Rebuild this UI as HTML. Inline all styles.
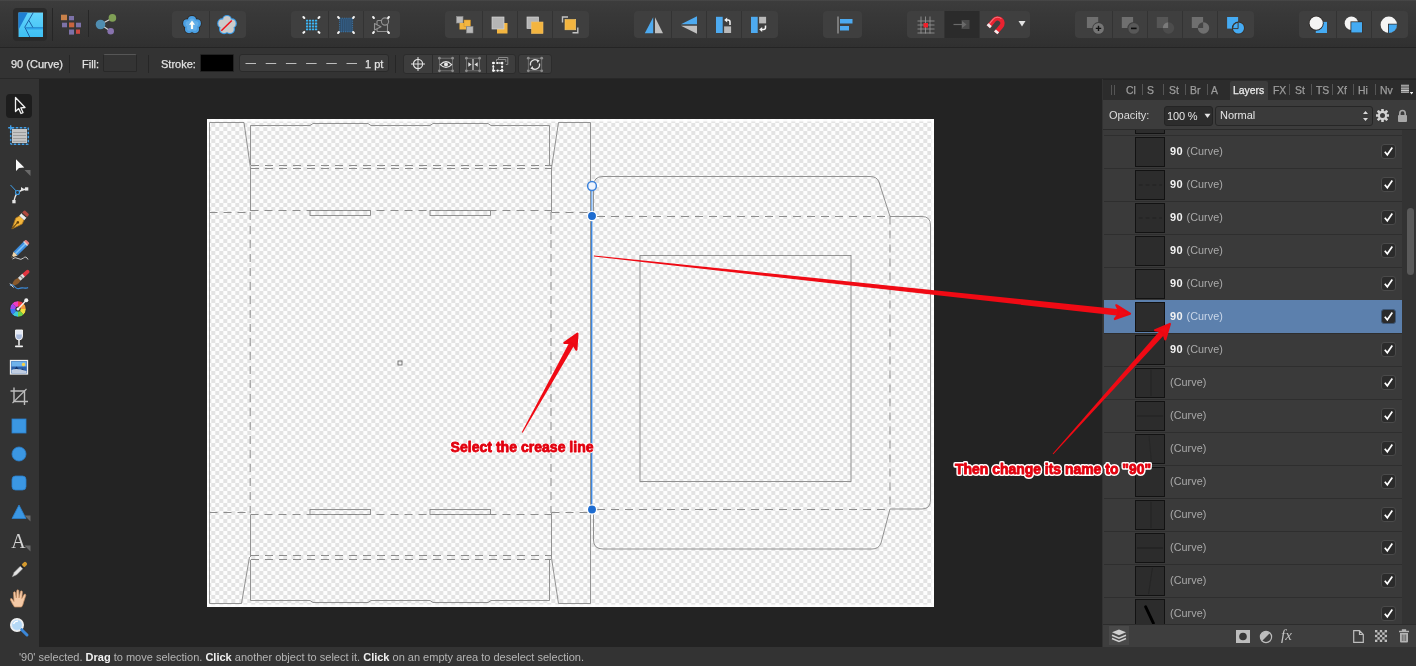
<!DOCTYPE html>
<html>
<head>
<meta charset="utf-8">
<title>Affinity Designer</title>
<style>
*{box-sizing:border-box;margin:0;padding:0}
html,body{width:1416px;height:666px;overflow:hidden;background:#232323;font-family:"Liberation Sans",sans-serif;font-size:11px;color:#d8d8d8}
.abs{position:absolute}
#top{left:0;top:0;width:1416px;height:48px;background:linear-gradient(#4a4a4a 0,#3c3c3c 1.5px,#383838 14px,#343434 32px,#303030 47px);border-bottom:1px solid #242424}
#ctx{left:0;top:48px;width:1416px;height:31px;background:#333;border-bottom:1px solid #282828}
#tools{left:0;top:79px;width:39px;height:568px;background:#333}
#work{left:39px;top:79px;width:1064px;height:568px;background:#232323}
#status{left:0;top:647px;width:1416px;height:19px;background:#333;color:#b4b4b4;font-size:11px;line-height:21px;padding-left:19px;white-space:nowrap;letter-spacing:0px}
#status b{color:#f0f0f0}
#panel{left:1103px;top:79px;width:313px;height:568px;background:#3a3a3a}
.grp{position:absolute;top:11px;height:27px;background:#3f3f3f;border-radius:4px}
.grp i{position:absolute;top:0;width:1px;height:27px;background:#333}
.cgrp{position:absolute;top:54px;height:20px;background:#3d3d3d;border-radius:3px;border:1px solid #2c2c2c}
.vsep{position:absolute;width:1px;background:#262626}
.lbl{position:absolute;top:58px;font-size:11px;line-height:13px;color:#e2e2e2;white-space:nowrap;-webkit-text-stroke:.25px #e2e2e2;letter-spacing:0}
/* layers */
.row{position:absolute;left:1px;width:298px;height:33px;background:#3a3a3a;border-top:1px solid #2e2e2e}
.row.sel{background:#5c80ad;border-top-color:#5c80ad}
.th{position:absolute;left:31px;top:1px;width:30px;height:30px;background:#2c2c2c;border:1px solid #121212}
.nm{position:absolute;left:66px;top:9px;font-size:10.8px;line-height:13px;color:#a9a9a9;white-space:nowrap;letter-spacing:0.05px}
.nm b{color:#f2f2f2;letter-spacing:.5px;font-size:11px;margin-right:.2px}
.row.sel .nm{color:#c9d6e8}
.cb{position:absolute;left:277px;top:8px;width:15px;height:15px;border-radius:3px;background:#2b2b2b;border:1px solid #4a4a4a}
.row.sel .cb{border-color:#3b5575}
.tab{position:absolute;top:5px;font-size:10.4px;line-height:13px;color:#9c9c9c;white-space:nowrap;-webkit-text-stroke:.25px currentColor}
.tsep{position:absolute;top:5px;width:1px;height:11px;background:#555}
</style>
</head>
<body>
<div id="wrap" style="position:absolute;left:0;top:0;width:1416px;height:666px;will-change:transform;overflow:hidden">
<div id="top" class="abs">
<div class="abs" style="left:13px;top:8px;width:34px;height:33px;background:#2a2a2a;border-radius:4px"></div>
<svg class="abs" style="left:17.500px;top:11.500px" width="25.500" height="25.800" viewBox="-0.5 -0.5 25.5 25.8">
<defs><linearGradient id="lg" x1="0" y1="0" x2="0" y2="1"><stop offset="0" stop-color="#64d4fc"/><stop offset="1" stop-color="#3dc0f4"/></linearGradient></defs>
<rect x="-0.500" y="-0.500" width="25.500" height="25.800" fill="#3a1d14"/>
<rect width="24.500" height="24.800" fill="url(#lg)"/>
<path d="M0,0 H9.300 L0,17.200Z" fill="#1e7fd3"/>
<path d="M7.200,15 H24.500 V17 H8.200Z" fill="#2ea4ea"/>
<path d="M14.800,0 L6.300,14.600 L11.400,24.800 M10.300,7.800 L14.400,15" stroke="#17569c" stroke-width=".9" fill="none"/>
<path d="M7,15.100 H24.500" stroke="#1f74bd" stroke-width=".6"/>
</svg>
<div class="vsep" style="left:52px;top:8px;height:33px;background:#262626"></div>
<svg class="abs" style="left:60px;top:13px" width="22" height="23" viewBox="0 0 22 23">
<rect x="1" y="1.700" width="6" height="5.500" fill="#c9814a"/><rect x="9" y="3" width="5" height="4.300" fill="#7d72a8"/>
<rect x="2" y="9.700" width="5" height="4.600" fill="#7d72a8"/><rect x="9" y="9.500" width="5.200" height="4.800" fill="#c8643f"/><rect x="16" y="9.700" width="5" height="4.600" fill="#7d72a8"/>
<rect x="9" y="16.500" width="5" height="5.100" fill="#7d72a8"/><rect x="16" y="16.500" width="4" height="4.300" fill="#cc4a42"/>
</svg>
<div class="vsep" style="left:88px;top:10px;height:27px;background:#262626"></div>
<svg class="abs" style="left:95px;top:13px" width="23" height="23" viewBox="0 0 23 23">
<path d="M5.500,11.500 L17.400,4.900 M5.500,11.500 L15.700,18.200" stroke="#d6d6d6" stroke-width="1.100"/>
<circle cx="5.500" cy="11.500" r="4.800" fill="#4f8db0"/><circle cx="17.400" cy="4.900" r="3.800" fill="#7f9f55"/><circle cx="15.700" cy="18.200" r="3.300" fill="#8873ae"/>
</svg>

<div class="grp" style="left:172px;width:74px"><i style="left:37px"></i></div>
<svg class="abs" style="left:181px;top:13px" width="22" height="23" viewBox="0 0 22 23"><circle cx="11.00" cy="7.00" r="5.00" fill="#2e2a28"/><circle cx="15.76" cy="10.45" r="5.00" fill="#2e2a28"/><circle cx="13.94" cy="16.05" r="5.00" fill="#2e2a28"/><circle cx="8.06" cy="16.05" r="5.00" fill="#2e2a28"/><circle cx="6.24" cy="10.45" r="5.00" fill="#2e2a28"/><circle cx="11.00" cy="7.00" r="4.10" fill="#4a9fe2"/><circle cx="15.76" cy="10.45" r="4.10" fill="#4a9fe2"/><circle cx="13.94" cy="16.05" r="4.10" fill="#4a9fe2"/><circle cx="8.06" cy="16.05" r="4.10" fill="#4a9fe2"/><circle cx="6.24" cy="10.45" r="4.10" fill="#4a9fe2"/><circle cx="11" cy="12" r="5.00" fill="#4a9fe2"/><circle cx="11.00" cy="8.20" r="2.80" fill="#62aee8"/><circle cx="14.61" cy="10.83" r="2.80" fill="#62aee8"/><circle cx="13.23" cy="15.07" r="2.80" fill="#62aee8"/><circle cx="8.77" cy="15.07" r="2.80" fill="#62aee8"/><circle cx="7.39" cy="10.83" r="2.80" fill="#62aee8"/><circle cx="11" cy="12" r="4.00" fill="#62aee8"/><path d="M11,7.600 L14,11.800 H12.100 V16 H9.900 V11.800 H8Z" fill="#fdfdf6"/></svg>
<svg class="abs" style="left:216px;top:13px" width="22" height="23" viewBox="0 0 22 23"><circle cx="11.00" cy="7.00" r="5.10" fill="#3a9be6"/><circle cx="15.76" cy="10.45" r="5.10" fill="#3a9be6"/><circle cx="13.94" cy="16.05" r="5.10" fill="#3a9be6"/><circle cx="8.06" cy="16.05" r="5.10" fill="#3a9be6"/><circle cx="6.24" cy="10.45" r="5.10" fill="#3a9be6"/><circle cx="11.00" cy="7.00" r="3.90" fill="#cbcbcb"/><circle cx="15.76" cy="10.45" r="3.90" fill="#cbcbcb"/><circle cx="13.94" cy="16.05" r="3.90" fill="#cbcbcb"/><circle cx="8.06" cy="16.05" r="3.90" fill="#cbcbcb"/><circle cx="6.24" cy="10.45" r="3.90" fill="#cbcbcb"/><circle cx="11" cy="12" r="5.00" fill="#cbcbcb"/><path d="M5.300,17.700 L15.800,7.500" stroke="#f0101a" stroke-width="1.500"/></svg>

<div class="grp" style="left:291px;width:109px"><i style="left:37px"></i><i style="left:72px"></i></div>
<svg class="abs" style="left:300px;top:14px" width="22" height="22" viewBox="0 0 22 22"><g fill="#3cb6f6"><rect x="6" y="5.7" width="2.200" height="1.900" rx=".3"/><rect x="9" y="5.7" width="2.200" height="1.900" rx=".3"/><rect x="12" y="5.7" width="2.200" height="1.900" rx=".3"/><rect x="15" y="5.7" width="2.200" height="1.900" rx=".3"/><rect x="6" y="8.6" width="2.200" height="1.900" rx=".3"/><rect x="9" y="8.6" width="2.200" height="1.900" rx=".3"/><rect x="12" y="8.6" width="2.200" height="1.900" rx=".3"/><rect x="15" y="8.6" width="2.200" height="1.900" rx=".3"/><rect x="6" y="11.5" width="2.200" height="1.900" rx=".3"/><rect x="9" y="11.5" width="2.200" height="1.900" rx=".3"/><rect x="12" y="11.5" width="2.200" height="1.900" rx=".3"/><rect x="15" y="11.5" width="2.200" height="1.900" rx=".3"/><rect x="6" y="14.4" width="2.200" height="1.900" rx=".3"/><rect x="9" y="14.4" width="2.200" height="1.900" rx=".3"/><rect x="12" y="14.4" width="2.200" height="1.900" rx=".3"/><rect x="15" y="14.4" width="2.200" height="1.900" rx=".3"/></g><path d="M3.400,3.100 L4.300,4 M19.400,3.100 L18.500,4 M3.400,18.800 L4.300,17.900 M19.400,18.800 L18.500,17.900" stroke="#f4f4f4" stroke-width="2.100" stroke-linecap="round"/></svg>
<svg class="abs" style="left:335.400px;top:13.900px" width="22" height="22" viewBox="0 0 22 22"><rect x="4.600" y="4.200" width="13" height="13.600" fill="#2f4b67"/><path d="M5.60,4.600 V18M7.50,4.600 V18M9.40,4.600 V18M11.30,4.600 V18M13.20,4.600 V18M15.10,4.600 V18" stroke="#3f86c4" stroke-width=".6" stroke-opacity=".6" transform="translate(.8 0)"/><rect x="4.600" y="4.200" width="13" height="13.600" fill="none" stroke="#3f86c4" stroke-width=".7" stroke-dasharray="1.200 1"/><path d="M3.100,3.100 L3.900,3.900 M18.900,3.100 L18.100,3.900 M3.100,18.900 L3.900,18.100 M18.900,18.900 L18.100,18.100" stroke="#f4f4f4" stroke-width="2.100" stroke-linecap="round"/></svg>
<svg class="abs" style="left:370.300px;top:13.900px" width="22" height="22" viewBox="0 0 22 22"><rect x="7" y="6.500" width="10.500" height="11" rx="1" fill="none" stroke="#929292" stroke-width="1.100"/><circle cx="15" cy="7.500" r="3.600" fill="#454545" stroke="#929292" stroke-width="1.100"/><path d="M4.500,9.500 L11,12.700 L4.500,16Z" fill="#454545" stroke="#929292" stroke-width="1.100" stroke-linejoin="round"/><path d="M3.100,3.100 L3.900,3.900 M18.900,3.100 L18.100,3.900 M3.100,18.900 L3.900,18.100 M18.900,18.900 L18.100,18.100" stroke="#f4f4f4" stroke-width="2.100" stroke-linecap="round"/></svg>

<div class="grp" style="left:445px;width:144px"><i style="left:37px"></i><i style="left:72px"></i><i style="left:107px"></i></div>
<svg class="abs" style="left:453px;top:13.500px" width="22" height="22" viewBox="0 0 22 22">
<rect x="3.5" y="2.5" width="6.5" height="6.5" fill="#b9b9b9" stroke="#8d8d8d" stroke-width=".6"/>
<rect x="6.5" y="9" width="6.5" height="6.5" fill="#f3b540"/><rect x="11" y="6" width="6.5" height="6.5" fill="#f3b540" stroke="#c98a20" stroke-width=".5"/>
<rect x="13.5" y="12.5" width="6.5" height="6.5" fill="#b9b9b9" stroke="#8d8d8d" stroke-width=".6"/>
</svg>
<svg class="abs" style="left:488px;top:13.500px" width="22" height="22" viewBox="0 0 22 22">
<rect x="9" y="9" width="10.5" height="10.5" fill="#f3b540"/>
<rect x="4" y="3" width="12" height="12" fill="#b5b5b5" stroke="#d5d5d5" stroke-width=".7"/>
</svg>
<svg class="abs" style="left:523px;top:13.500px" width="22" height="22" viewBox="0 0 22 22">
<rect x="4" y="3" width="11.5" height="11.5" fill="#b5b5b5" stroke="#d5d5d5" stroke-width=".7"/>
<rect x="8.5" y="8" width="11.5" height="11.5" fill="#f3b540" stroke="#f3bf62" stroke-width=".6"/>
</svg>
<svg class="abs" style="left:558px;top:13.500px" width="22" height="22" viewBox="0 0 22 22">
<path d="M4.500,8.500 V3 H10" fill="none" stroke="#c4c4c4" stroke-width="1.400"/>
<path d="M19.800,13.500 V18.800 H14.500" fill="none" stroke="#c4c4c4" stroke-width="1.400"/>
<rect x="7" y="5.500" width="10.700" height="10.300" fill="#f3b540" stroke="#f7c968" stroke-width=".6"/>
</svg>

<div class="grp" style="left:634px;width:144px"><i style="left:37px"></i><i style="left:72px"></i><i style="left:107px"></i></div>
<svg class="abs" style="left:642px;top:13.500px" width="22" height="22" viewBox="0 0 22 22">
<path d="M11.200,3.300 V19.300 H2.800Z" fill="#4daaf0"/><path d="M13,3.300 V19.300 H21Z" fill="#c0c0c0"/>
</svg>
<svg class="abs" style="left:677px;top:13.500px" width="22" height="22" viewBox="0 0 22 22">
<path d="M20,2.200 V10.200 H4Z" fill="#4daaf0"/><path d="M20,19.800 V11.800 H4Z" fill="#c0c0c0"/>
</svg>
<svg class="abs" style="left:712px;top:13.500px" width="22" height="22" viewBox="0 0 22 22">
<rect x="4" y="2.800" width="6.700" height="16.200" fill="#4daaf0"/><rect x="12.100" y="12.400" width="7" height="6.600" fill="#b9b9b9"/>
<path d="M18,11 V8 Q18,6 16,6 H14.500" fill="none" stroke="#f4f4f4" stroke-width="1.500"/><path d="M15.200,3.400 V8.600 L12.200,6Z" fill="#f4f4f4"/>
</svg>
<svg class="abs" style="left:747px;top:13.500px" width="22" height="22" viewBox="0 0 22 22">
<rect x="4" y="2.800" width="6.700" height="16.200" fill="#4daaf0"/><rect x="12.100" y="2.800" width="7" height="6.600" fill="#b9b9b9"/>
<path d="M18.500,11.500 V13.500 Q18.500,15.500 16.500,15.500 H14.500" fill="none" stroke="#f4f4f4" stroke-width="1.500"/><path d="M15.200,12.900 V18.100 L12.200,15.500Z" fill="#f4f4f4"/>
</svg>

<div class="grp" style="left:823px;width:39px"></div>
<svg class="abs" style="left:833.300px;top:13.500px" width="22" height="22" viewBox="0 0 22 22">
<path d="M5,2.500 V19.500" stroke="#c4c4c4" stroke-width=".9"/><rect x="7" y="5" width="12.500" height="4.500" fill="#4daaf0"/><rect x="7" y="12" width="9" height="4.500" fill="#4daaf0"/>
</svg>

<div class="grp" style="left:907px;width:123px;background:#3f3f3f"><i style="left:37px"></i><i style="left:72px"></i></div>
<div class="abs" style="left:945px;top:11px;width:34px;height:27px;background:#2b2b2b"></div>
<svg class="abs" style="left:915px;top:14px" width="22" height="22" viewBox="0 0 22 22">
<path d="M2.5,7 H19.5 M2.5,11 H19.5 M2.5,15 H19.5 M2.5,19 H19.5 M6,2.5 V19.5 M10.5,2.5 V19.5 M15,2.5 V19.5" stroke="#9a9a9a" stroke-width=".8"/>
<rect x="8.5" y="9" width="4.5" height="4.5" fill="#f2202a"/>
</svg>
<svg class="abs" style="left:951px;top:14px" width="22" height="22" viewBox="0 0 22 22">
<rect x="10.5" y="6" width="8" height="9" fill="#4a4a4a"/><path d="M2.5,10.5 H12" stroke="#6a6a6a" stroke-width="1.2"/><path d="M11,7 L15.5,10.5 L11,14Z" fill="#6a6a6a"/>
</svg>
<svg class="abs" style="left:985.900px;top:14.400px" width="21" height="21" viewBox="0 0 24 24">
<g transform="rotate(40 12 12)">
<path d="M4,20 V10 A8,8 0 0 1 20,10 V20 H15 V10 A3,3 0 0 0 9,10 V20Z" fill="#ea2230"/>
<path d="M5.200,19 V10 A6.800,6.800 0 0 1 12,3.300" fill="none" stroke="#f4737c" stroke-width="1.200"/>
<rect x="4" y="16.800" width="5" height="3.200" fill="#ededed"/><rect x="15" y="16.800" width="5" height="3.200" fill="#ededed"/>
</g>
</svg>
<svg class="abs" style="left:1018.400px;top:20.400px" width="8" height="8" viewBox="0 0 8 8"><path d="M0.5,1 H7.5 L4,6.5Z" fill="#e2e2e2"/></svg>

<div class="grp" style="left:1075px;width:179px"><i style="left:37px"></i><i style="left:72px"></i><i style="left:107px"></i><i style="left:142px"></i></div>
<svg class="abs" style="left:1083px;top:13.600px" width="22" height="22" viewBox="0 0 22 22">
<rect x="3.900" y="3" width="11.300" height="11" fill="#6f6f6f"/><circle cx="15.500" cy="14.400" r="6.300" fill="#3f3f3f"/><circle cx="15.500" cy="14.400" r="5.400" fill="#757575"/><path d="M12.800,14.400 H18.200 M15.500,11.700 V17.100" stroke="#111" stroke-width="1.400"/>
</svg>
<svg class="abs" style="left:1118px;top:13.600px" width="22" height="22" viewBox="0 0 22 22">
<rect x="3.800" y="3" width="11.300" height="11" fill="#6f6f6f"/><circle cx="15.800" cy="14.400" r="6.500" fill="#3f3f3f"/><circle cx="15.800" cy="14.400" r="5.400" fill="#585858"/><path d="M13,14.400 H18.600" stroke="#0c0c0c" stroke-width="1.600"/>
</svg>
<svg class="abs" style="left:1153px;top:13.600px" width="22" height="22" viewBox="0 0 22 22">
<rect x="3.800" y="3" width="11.300" height="11" fill="#565656"/><circle cx="15.500" cy="14" r="5.700" fill="#4c4c4c"/><path d="M9.800,14 A5.700,5.700 0 0 1 15.100,8.320 V14Z" fill="#7a7a7a"/>
</svg>
<svg class="abs" style="left:1188px;top:13.600px" width="22" height="22" viewBox="0 0 22 22">
<rect x="3.800" y="3" width="11.300" height="11" fill="#6f6f6f"/><circle cx="15.500" cy="14" r="5.700" fill="#6f6f6f"/><path d="M9.800,14 A5.700,5.700 0 0 1 15.100,8.320 V14Z" fill="#454545"/>
</svg>
<svg class="abs" style="left:1223px;top:13.600px" width="22" height="22" viewBox="0 0 22 22">
<rect x="4.100" y="3" width="11" height="11.600" fill="#45abf3"/><circle cx="15.400" cy="14" r="6.500" fill="#3a3028"/><circle cx="15.400" cy="14" r="5.600" fill="#45abf3"/><path d="M9.800,14.600 H15.100 V8.400" fill="none" stroke="#3a3028" stroke-width=".9"/><path d="M9.800,14 A5.600,5.600 0 0 1 15.100,8.400" fill="none" stroke="#3a3028" stroke-width=".9"/>
</svg>

<div class="grp" style="left:1299px;width:109px"><i style="left:37px"></i><i style="left:72px"></i></div>
<svg class="abs" style="left:1307px;top:13.600px" width="22" height="22" viewBox="0 0 22 22">
<rect x="8.800" y="7.900" width="11.200" height="11.100" fill="#45abf3"/><circle cx="9.200" cy="9.200" r="7.500" fill="#2e2a28"/><circle cx="9.200" cy="9.200" r="6.600" fill="#f4f4f4"/>
</svg>
<svg class="abs" style="left:1342px;top:13.600px" width="22" height="22" viewBox="0 0 22 22">
<circle cx="9.400" cy="9.200" r="6.700" fill="#f4f4f4"/><rect x="8.500" y="7.400" width="12" height="11.600" fill="#2e2a28"/><rect x="9.300" y="8.200" width="10.700" height="10.300" fill="#45abf3"/>
</svg>
<svg class="abs" style="left:1377px;top:13.600px" width="22" height="22" viewBox="0 0 22 22">
<circle cx="11.800" cy="10.800" r="8.200" fill="#f4f4f4"/><path d="M11,9.800 H19.950 A8.200,8.200 0 0 1 11,18.950Z" fill="#2e2a28"/><path d="M11.800,10.600 H20 A8.200,8.200 0 0 1 11.800,19Z" fill="#45abf3"/>
</svg>
<!--TOP2-->
</div>
<div id="ctx" class="abs"></div>
<div class="lbl" style="left:11px">90 (Curve)</div>
<div class="vsep" style="left:69px;top:55px;height:18px"></div>
<div class="lbl" style="left:82px">Fill:</div>
<div class="abs" style="left:103px;top:54px;width:34px;height:18px;background:#343434;border:1px solid #282828;border-radius:2px;border-top-color:#565656"></div>
<div class="vsep" style="left:148px;top:55px;height:18px"></div>
<div class="lbl" style="left:161px">Stroke:</div>
<div class="abs" style="left:200px;top:54px;width:34px;height:18px;background:#000;border:1px solid #222;border-radius:1px"></div>
<div class="abs" style="left:239px;top:54px;width:150px;height:18px;background:#3c3c3c;border:1px solid #2a2a2a;border-radius:3px"></div>
<svg class="abs" style="left:239px;top:54px" width="150" height="18" viewBox="0 0 150 18"><path d="M6.5,9.5 H120" stroke="#bdbdbd" stroke-width="1.2" stroke-dasharray="10.5 9.7"/></svg>
<div class="lbl" style="left:365px">1 pt</div>
<div class="vsep" style="left:395px;top:55px;height:18px"></div>
<div class="cgrp" style="left:403px;width:113px"></div>
<div class="vsep" style="left:432px;top:55px;height:18px;background:#2c2c2c"></div><div class="vsep" style="left:459px;top:55px;height:18px;background:#2c2c2c"></div><div class="vsep" style="left:486px;top:55px;height:18px;background:#2c2c2c"></div>
<div class="cgrp" style="left:518px;width:34px"></div>
<svg class="abs" style="left:410px;top:56px" width="16" height="16" viewBox="0 0 16 16"><circle cx="8" cy="8" r="4.6" fill="none" stroke="#e0e0e0" stroke-width="1.2"/><path d="M8,1 V15 M1,8 H15" stroke="#e0e0e0" stroke-width="1"/></svg>
<svg class="abs" style="left:437px;top:56px" width="18" height="17" viewBox="0 0 18 17"><rect x="2.4" y="2.2" width="13.2" height="12.600000000000001" fill="none" stroke="#787878" stroke-width=".8"/><circle cx="2.4" cy="2.2" r="1.400" fill="#8c8c8c"/><circle cx="15.6" cy="2.2" r="1.400" fill="#8c8c8c"/><circle cx="2.4" cy="14.8" r="1.400" fill="#8c8c8c"/><circle cx="15.6" cy="14.8" r="1.400" fill="#8c8c8c"/><path d="M3.300,8.600 Q9,2.600 14.700,8.600 Q9,14.400 3.300,8.600Z" fill="#3b3b3b" stroke="#e2e2e2" stroke-width="1.100"/><circle cx="9" cy="8.600" r="2" fill="#e8e8e8"/></svg>
<svg class="abs" style="left:464px;top:56px" width="18" height="17" viewBox="0 0 18 17"><rect x="2.4" y="2.2" width="13.2" height="12.600000000000001" fill="none" stroke="#787878" stroke-width=".8"/><circle cx="2.4" cy="2.2" r="1.400" fill="#8c8c8c"/><circle cx="15.6" cy="2.2" r="1.400" fill="#8c8c8c"/><circle cx="2.4" cy="14.8" r="1.400" fill="#8c8c8c"/><circle cx="15.6" cy="14.8" r="1.400" fill="#8c8c8c"/><path d="M9,3 V14" stroke="#e0e0e0" stroke-width="1.100"/><path d="M4.300,6.300 L7.600,8.500 L4.300,10.700Z M13.700,6.300 L10.400,8.500 L13.700,10.700Z" fill="#e0e0e0"/></svg>
<svg class="abs" style="left:490px;top:55px" width="20" height="18" viewBox="0 0 20 18">
<path d="M8.500,4.500 V2.500 H17.800 V9.500 H15.800 M6.500,6.500 V4.500 H15.800 V7" fill="none" stroke="#8a8a8a" stroke-width="1"/>
<rect x="3.300" y="8" width="8.800" height="7.600" fill="none" stroke="#f4f4f4" stroke-width="1.300" stroke-dasharray="1.600 1.300"/>
<g fill="#f6f6f6"><circle cx="3.300" cy="8" r="1.300"/><circle cx="12.100" cy="8" r="1.300"/><circle cx="3.300" cy="15.600" r="1.300"/><circle cx="12.100" cy="15.600" r="1.300"/><circle cx="7.700" cy="8" r="1.100"/><circle cx="7.700" cy="15.600" r="1.100"/><circle cx="3.300" cy="11.800" r="1.100"/><circle cx="12.100" cy="11.800" r="1.100"/></g>
</svg>
<svg class="abs" style="left:526px;top:56px" width="18" height="17" viewBox="0 0 18 17"><rect x="2.3" y="2.2" width="13.399999999999999" height="12.600000000000001" fill="none" stroke="#787878" stroke-width=".8"/><circle cx="2.3" cy="2.2" r="1.400" fill="#8c8c8c"/><circle cx="15.7" cy="2.2" r="1.400" fill="#8c8c8c"/><circle cx="2.3" cy="14.8" r="1.400" fill="#8c8c8c"/><circle cx="15.7" cy="14.8" r="1.400" fill="#8c8c8c"/><path d="M4.600,9.500 A4.500,4.500 0 0 1 12,5 M13.400,7.500 A4.500,4.500 0 0 1 6,12" fill="none" stroke="#e0e0e0" stroke-width="1.300"/><path d="M10.600,3.200 L13.600,4.600 L11.400,7Z M7.400,13.800 L4.400,12.400 L6.600,10Z" fill="#e0e0e0"/></svg>

<div id="tools" class="abs"></div>
<div class="abs" style="left:6px;top:94px;width:26px;height:24px;background:#1d1d1d;border-radius:4px"></div>
<svg class="abs" style="left:7px;top:93px" width="24" height="24" viewBox="0 0 24 24"><path d="M8.500,4.500 L8.500,18.500 L11.700,15.600 L14,20.500 L16,19.600 L13.800,14.800 L18,14.500Z" fill="#1d1d1d" stroke="#f2f2f2" stroke-width="1.300" stroke-linejoin="round"/></svg>
<svg class="abs" style="left:7px;top:123px" width="24" height="24" viewBox="0 0 24 24"><rect x="5" y="6" width="15" height="14" fill="#c4c4c4"/><path d="M6,9.500 H19 M6,12.500 H19 M6,15.500 H19 M6,18.300 H19" stroke="#9d9d9d" stroke-width="1"/><rect x="3.700" y="4.700" width="17.600" height="16.600" rx="1" fill="none" stroke="#3f9ee8" stroke-width="1.500" stroke-dasharray="2.600 1.400"/><path d="M1.200,4.700 H6.200 M3.700,2.200 V7.200" stroke="#3f9ee8" stroke-width="1.400"/></svg>
<svg class="abs" style="left:7px;top:153px" width="24" height="24" viewBox="0 0 24 24"><path d="M9,6.300 L9,18 L12,15 L17.300,14.600Z" fill="#fafafa"/><path d="M23.5,23 v-6 h-6Z" fill="#6a6a6a"/></svg>
<svg class="abs" style="left:7px;top:181px" width="24" height="24" viewBox="0 0 24 24"><path d="M7,21 Q8,9 20,8" fill="none" stroke="#e6e6e6" stroke-width="1.300"/><path d="M3.500,4 L11,12" stroke="#3f9ee8" stroke-width="1"/><circle cx="10.500" cy="11.500" r="2" fill="#333" stroke="#3f9ee8" stroke-width="1.100"/><rect x="18" y="6.300" width="3.300" height="3.300" fill="#e6e6e6"/><rect x="5.300" y="19" width="3.300" height="3.300" fill="#e6e6e6"/><path d="M17,8 L14,6 V10Z" fill="#e6e6e6"/></svg>
<svg class="abs" style="left:7px;top:209px" width="24" height="24" viewBox="0 0 24 24"><g transform="translate(12 12) rotate(42) scale(1.180) translate(-12 -12.500)"><path d="M12,21.500 L8.300,12.500 L9.500,9 H14.500 L15.700,12.500Z" fill="#f2b53c" stroke="#a8731a" stroke-width=".6"/><path d="M12,21 V14.500" stroke="#5e3e0c" stroke-width=".9"/><circle cx="12" cy="14" r="1.100" fill="#5e3e0c"/><rect x="9.200" y="6" width="5.600" height="3" fill="#ececec"/><rect x="9.200" y="2.500" width="5.600" height="3.500" rx="1" fill="#b04a3f"/><rect x="9.200" y="5.300" width="5.600" height="1.100" fill="#3a3a3a"/></g></svg>
<svg class="abs" style="left:7px;top:239px" width="24" height="24" viewBox="0 0 24 24"><g transform="translate(12.500 10.500) rotate(45) scale(1.150) translate(-12 -11)"><rect x="9.700" y="3.500" width="4.800" height="12.500" fill="#3c8ee0"/><rect x="11.400" y="3.500" width="1.400" height="12.500" fill="#7cc0f5"/><rect x="9.700" y="1" width="4.800" height="2.500" rx="1" fill="#e87f7f"/><rect x="9.700" y="3" width="4.800" height="1.200" fill="#d9d9d9"/><path d="M9.700,16 L12.100,21 L14.500,16Z" fill="#f0d5a8"/><path d="M11.300,19.300 L12.100,21 L12.900,19.300Z" fill="#333"/></g><path d="M5.500,20 Q8,17.500 11,19.500 T16.500,19 T21,20.500" fill="none" stroke="#c9c9c9" stroke-width="1"/></svg>
<svg class="abs" style="left:7px;top:268px" width="24" height="24" viewBox="0 0 24 24"><g transform="translate(13 10.500) rotate(48) scale(1.200) translate(-12.200 -10.500)"><rect x="10.600" y="0.500" width="3.200" height="7" rx="1.400" fill="#e2343f"/><rect x="10.600" y="6.500" width="3.200" height="5" fill="#dcdcdc"/><rect x="10.600" y="8.300" width="3.200" height="1" fill="#888"/><path d="M10.600,11.500 H13.800 Q15.500,15.500 12.200,19.500 Q9,15.500 10.600,11.500Z" fill="#8a5a2c"/></g><path d="M3,17.500 Q5,15.500 7.500,18.500 T12,20.500 T17,20 T21,19.500" fill="none" stroke="#3c8ee0" stroke-width="1.100"/><path d="M3,15.500 L6.500,19.500" stroke="#e6e6e6" stroke-width="1"/></svg>
<svg class="abs" style="left:7px;top:296px" width="24" height="24" viewBox="0 0 24 24"><path d="M11,13 L11.00,5.00 A8,8 0 0 1 16.76,7.44 Z" fill="#f03c3c"/><path d="M11,13 L16.66,7.34 A8,8 0 0 1 19.00,13.14 Z" fill="#f09a3c"/><path d="M11,13 L19.00,13.00 A8,8 0 0 1 16.56,18.76 Z" fill="#f0e03c"/><path d="M11,13 L16.66,18.66 A8,8 0 0 1 10.86,21.00 Z" fill="#6cd04a"/><path d="M11,13 L11.00,21.00 A8,8 0 0 1 5.24,18.56 Z" fill="#3cc8d8"/><path d="M11,13 L5.34,18.66 A8,8 0 0 1 3.00,12.86 Z" fill="#3c78f0"/><path d="M11,13 L3.00,13.00 A8,8 0 0 1 5.44,7.24 Z" fill="#9a4af0"/><path d="M11,13 L5.34,7.34 A8,8 0 0 1 11.14,5.00 Z" fill="#f03cc0"/><circle cx="11" cy="13" r="2.600" fill="#2c2c2c"/><circle cx="11" cy="13" r="8.300" fill="none" stroke="#2c2c2c" stroke-width=".8"/><path d="M11,13 L19,4.500" stroke="#f2f2f2" stroke-width="1.400"/><circle cx="19.300" cy="4.300" r="2" fill="#f2f2f2"/><circle cx="11" cy="13" r="1.500" fill="#f2f2f2"/></svg>
<svg class="abs" style="left:7px;top:325px" width="24" height="24" viewBox="0 0 24 24"><path d="M8.500,5 H15.500 V11 Q15.500,15 12,15 Q8.500,15 8.500,11Z" fill="#e4e9f4" stroke="#f8f8f8" stroke-width=".9"/><path d="M9.200,9.500 H14.800 V11 Q14.800,14.300 12,14.300 Q9.200,14.300 9.200,11Z" fill="#a9bbdc"/><path d="M12,15 V20.500" stroke="#f2f2f2" stroke-width="1.500"/><path d="M8.800,21.300 H15.200" stroke="#f2f2f2" stroke-width="1.700" stroke-linecap="round"/></svg>
<svg class="abs" style="left:7px;top:355px" width="24" height="24" viewBox="0 0 24 24"><rect x="3.500" y="5.500" width="17" height="13.500" fill="#2c5fa8" stroke="#f0f0f0" stroke-width="1.300"/><rect x="4.500" y="6.500" width="15" height="5" fill="#6fb2ec"/><circle cx="16.500" cy="9.500" r="1.700" fill="#f5d04a"/><path d="M4.500,18 L9.500,11.500 L13,15.500 L15.500,13.500 L19.500,18Z" fill="#17396e"/><path d="M4.500,15 Q9,12.500 19.500,16 V18 H4.500Z" fill="#dfe8f4" opacity=".85"/></svg>
<svg class="abs" style="left:7px;top:384px" width="24" height="24" viewBox="0 0 24 24"><path d="M7,3.500 V17.500 H21 M3.500,7 H17.500 V21" fill="none" stroke="#bdbdbd" stroke-width="1.400"/><path d="M5.500,19 L19.500,5" stroke="#bdbdbd" stroke-width="1.100"/></svg>
<svg class="abs" style="left:7px;top:414px" width="24" height="24" viewBox="0 0 24 24"><rect x="5" y="5" width="14" height="14" fill="#3b97e3" stroke="#2a7fcc" stroke-width=".8"/></svg>
<svg class="abs" style="left:7px;top:442px" width="24" height="24" viewBox="0 0 24 24"><circle cx="12" cy="12" r="7" fill="#3b97e3" stroke="#2a7fcc" stroke-width=".8"/></svg>
<svg class="abs" style="left:7px;top:471px" width="24" height="24" viewBox="0 0 24 24"><rect x="5" y="5" width="14" height="14" rx="3.500" fill="#3b97e3" stroke="#2a7fcc" stroke-width=".8"/></svg>
<svg class="abs" style="left:7px;top:500px" width="24" height="24" viewBox="0 0 24 24"><path d="M12,5 L19,18.500 H5Z" fill="#3b97e3" stroke="#2a7fcc" stroke-width=".8" stroke-linejoin="round"/><path d="M23.5,21.5 v-6 h-6Z" fill="#6a6a6a"/></svg>
<svg class="abs" style="left:7px;top:530px" width="24" height="24" viewBox="0 0 24 24"><text x="11.500" y="18" text-anchor="middle" font-family="Liberation Serif, serif" font-size="20" fill="#d2d2d2">A</text><path d="M23.5,21.5 v-6 h-6Z" fill="#6a6a6a"/></svg>
<svg class="abs" style="left:7px;top:558px" width="24" height="24" viewBox="0 0 24 24"><g transform="rotate(45 12 12)"><rect x="10" y="1.500" width="4" height="5.500" rx="1.800" fill="#d49a2e"/><rect x="8.800" y="6.500" width="6.400" height="2" fill="#2a2a2a"/><path d="M10.300,8.500 H13.700 V17 L12,21.500 L10.300,17Z" fill="#e4e4e4" stroke="#9a9a9a" stroke-width=".5"/></g></svg>
<svg class="abs" style="left:7px;top:586px" width="24" height="24" viewBox="0 0 24 24"><path d="M7.500,21 Q5,17.500 3.500,14 Q3,12 4.800,12.500 L7,15.500 L6.500,6.500 Q7,5 8.300,6.200 L9.300,12 L9.800,4.500 Q10.800,3 11.800,4.500 L12,12 L13.500,5.300 Q14.700,4.200 15.400,5.800 L14.800,12.500 L17.300,8.200 Q18.800,7.700 18.800,9.300 L16.500,16.500 Q16,19.500 14.500,21Z" fill="#f4c9a6" stroke="#c98f63" stroke-width=".7" stroke-linejoin="round"/></svg>
<svg class="abs" style="left:7px;top:615px" width="24" height="24" viewBox="0 0 24 24"><circle cx="10" cy="10" r="6.200" fill="#cfe4f7" stroke="#f0f0f0" stroke-width="1.600"/><circle cx="10" cy="10" r="4.800" fill="#b4d8f5"/><path d="M6.500,9 Q8,6 11,6.200" stroke="#fff" stroke-width="1.200" fill="none"/><path d="M14.700,14.700 L20,20" stroke="#3b87d8" stroke-width="3" stroke-linecap="round"/></svg>
<div id="work" class="abs"></div>
<!--CANVAS-->
<svg class="abs" style="left:0;top:0" width="1103" height="647" viewBox="0 0 1103 647">
<defs>
<pattern id="chk" x="207.3" y="119" width="8" height="8" patternUnits="userSpaceOnUse">
<rect width="8" height="8" fill="#fdfdfd"/><rect width="4" height="4" fill="#e3e3e3"/><rect x="4" y="4" width="4" height="4" fill="#e3e3e3"/>
</pattern>
</defs>
<rect x="207" y="119" width="727" height="488" fill="url(#chk)"/>
<rect x="208.25" y="120.25" width="724.5" height="485.5" fill="none" stroke="#ffffff" stroke-width="2.5" stroke-opacity=".85"/>
<g fill="none" stroke="#858585" stroke-width=".88">
<path d="M250.5,168 L244,122.5 L209.5,122.5 L209.5,603.5 L241.5,603.5 L249.5,557"/>
<path d="M551.5,168 L558.5,122.5 L590.5,122.5 L590.5,603.5 L558.5,603.5 L551.5,558"/>
<path d="M250.5,165 L250.5,125.5 L310,125.5 L313,123.5 L368,123.5 L371,125.5 L430,125.5 L433,123.5 L488,123.5 L491,125.5 L549.5,125.5 L549.5,165"/>
<path d="M250.5,560 L250.5,600.5 L310,600.5 L313,602.5 L368,602.5 L371,600.5 L430,600.5 L433,602.5 L488,602.5 L491,600.5 L549.5,600.5 L549.5,560"/>
<path d="M250.5,168 V211 M551.5,168 V212 M250.5,515 V557 M551.5,513 V558"/>
<rect x="310" y="210.5" width="60.5" height="5"/><rect x="430" y="210.5" width="60.5" height="5"/>
<rect x="310" y="509.500" width="60.5" height="5"/><rect x="430" y="509.500" width="60.5" height="5"/>
<path d="M593.5,216 V186 Q593.5,176.5 603,176.5 H870 Q877,176.5 879,182 L890,216.5 H922 Q930.5,216.5 930.5,225 V500 Q930.5,509 922,509 H890 L881,543 Q879,549 872,549 H603 Q593.5,549 593.5,540 V509"/>
<rect x="640" y="255.5" width="211" height="226"/>
<rect x="398" y="361" width="4" height="4" stroke="#666"/>
</g>
<g fill="none" stroke="#878787" stroke-width=".95" stroke-dasharray="8 6">
<path d="M209.5,212.5 H250 M250.5,210.5 H551.5 M551.5,212.5 H590.5"/>
<path d="M209.5,512.500 H250 M250.5,514.500 H551.5 M551.5,512.500 H590.5"/>
<path d="M251,165.500 H552 M251,168.500 H552 M251,555.500 H551 M251,559.500 H551"/>
<path d="M250.200,212 V513 M551,212 V513"/>
<path d="M597,216.5 H890 M890,216.5 V509 M597,509.5 H890"/>
</g>
<path d="M591.600,216 V509.5" stroke="#3580dc" stroke-width="1.100" fill="none"/><path d="M592.500,216 V509.5" stroke="#9cc5f5" stroke-width=".8" fill="none"/><path d="M591.500,190 V212" stroke="#7fb2ef" stroke-width="1.100" fill="none"/><path d="M592.500,190 V212" stroke="#b9d6f7" stroke-width="1" fill="none"/>
<circle cx="592" cy="186" r="4.4" fill="#eef4fd" stroke="#3b82dc" stroke-width="1.5"/>
<circle cx="592" cy="216" r="4.6" fill="#1c6bd0" stroke="#fff" stroke-width="1.3"/>
<circle cx="592" cy="509.5" r="4.6" fill="#1c6bd0" stroke="#fff" stroke-width="1.3"/>
</svg>
<!--/CANVAS-->
<div class="abs" style="left:1102px;top:79px;width:2px;height:568px;background:#323232"></div>
<div id="panel" class="abs">
<div class="abs" style="left:0;top:0;width:313px;height:21px;background:#2c2c2c;border-top:1px solid #242424"></div>
<div class="abs" style="left:127px;top:2px;width:38px;height:19px;background:#3c3c3c;border-radius:2px 2px 0 0"></div>
<div class="abs" style="left:8px;top:6px;width:1px;height:10px;background:#555"></div><div class="abs" style="left:11px;top:6px;width:1px;height:10px;background:#555"></div>
<div class="tab" style="left:23px">Cl</div><div class="tab" style="left:44px">S</div><div class="tab" style="left:66px">St</div><div class="tab" style="left:87px">Br</div><div class="tab" style="left:108px">A</div><div class="tab" style="left:170px">FX</div><div class="tab" style="left:192px">St</div><div class="tab" style="left:213px">TS</div><div class="tab" style="left:234px">Xf</div><div class="tab" style="left:255px">Hi</div><div class="tab" style="left:277px">Nv</div><div class="tab" style="left:130px;color:#ececec">Layers</div>
<div class="tsep" style="left:39px"></div><div class="tsep" style="left:60px"></div><div class="tsep" style="left:82px"></div><div class="tsep" style="left:104px"></div><div class="tsep" style="left:186px"></div><div class="tsep" style="left:208px"></div><div class="tsep" style="left:229px"></div><div class="tsep" style="left:250px"></div><div class="tsep" style="left:272px"></div>
<svg class="abs" style="left:297px;top:5px" width="13" height="12" viewBox="0 0 13 12"><path d="M1,1.300 H9 M1,3 H9 M1,4.700 H9 M1,6.400 H9 M1,8.100 H9" stroke="#c8c8c8" stroke-width="1.100"/><path d="M9.800,8 H13.400 L11.600,10.600Z" fill="#f0f0f0"/></svg>
<div class="abs" style="left:0;top:21px;width:313px;height:30px;background:#3c3c3c;border-bottom:1px solid #2a2a2a"></div>
<div class="abs" style="left:6px;top:30px;font-size:11px;line-height:13px;color:#dcdcdc;letter-spacing:0">Opacity:</div>
<div class="abs" style="left:61px;top:27px;width:49px;height:20px;background:#2c2c2c;border:1px solid #242424;border-radius:3px"></div>
<div class="abs" style="left:64px;top:31px;font-size:11px;line-height:13px;color:#e4e4e4;letter-spacing:-.15px">100 %</div>
<svg class="abs" style="left:101px;top:34px" width="7" height="6" viewBox="0 0 7 6"><path d="M0.500,0.800 H6.500 L3.500,5Z" fill="#e4e4e4"/></svg>
<div class="abs" style="left:112px;top:27px;width:158px;height:20px;background:#3a3a3a;border:1px solid #262626;border-radius:3px"></div>
<div class="abs" style="left:117px;top:30px;font-size:11px;line-height:13px;color:#e4e4e4;letter-spacing:-.05px">Normal</div>
<svg class="abs" style="left:259px;top:30px" width="7" height="14" viewBox="0 0 7 14"><path d="M1,5 L3.500,2 L6,5Z M1,9 L3.500,12 L6,9Z" fill="#d8d8d8"/></svg>
<svg class="abs" style="left:273px;top:30px" width="13" height="13" viewBox="0 0 13 13"><rect x="5.200" y="-0.300" width="2.600" height="3.200" rx=".5" transform="rotate(0 6.500 6.500)" fill="#d2d2d2"/><rect x="5.200" y="-0.300" width="2.600" height="3.200" rx=".5" transform="rotate(45 6.500 6.500)" fill="#d2d2d2"/><rect x="5.200" y="-0.300" width="2.600" height="3.200" rx=".5" transform="rotate(90 6.500 6.500)" fill="#d2d2d2"/><rect x="5.200" y="-0.300" width="2.600" height="3.200" rx=".5" transform="rotate(135 6.500 6.500)" fill="#d2d2d2"/><rect x="5.200" y="-0.300" width="2.600" height="3.200" rx=".5" transform="rotate(180 6.500 6.500)" fill="#d2d2d2"/><rect x="5.200" y="-0.300" width="2.600" height="3.200" rx=".5" transform="rotate(225 6.500 6.500)" fill="#d2d2d2"/><rect x="5.200" y="-0.300" width="2.600" height="3.200" rx=".5" transform="rotate(270 6.500 6.500)" fill="#d2d2d2"/><rect x="5.200" y="-0.300" width="2.600" height="3.200" rx=".5" transform="rotate(315 6.500 6.500)" fill="#d2d2d2"/><circle cx="6.500" cy="6.500" r="3.600" fill="none" stroke="#d2d2d2" stroke-width="2.200"/></svg>
<svg class="abs" style="left:294px;top:30px" width="11" height="14" viewBox="0 0 11 14"><path d="M2.800,6.500 V4.200 A2.700,2.700 0 0 1 8.200,4.200 V6.500" fill="none" stroke="#a8a8a8" stroke-width="1.600"/><rect x="1" y="6" width="9" height="7" rx="1" fill="#a8a8a8"/></svg>
<div class="abs" style="left:0;top:51px;width:313px;height:494px;overflow:hidden;background:#3a3a3a">
<div class="row" style="top:-28px"><div class="th"><svg width="28" height="28" viewBox="0 0 29 29" style="position:absolute;left:0;top:0"></svg></div><div class="nm"><b>90</b> (Curve)</div><div class="cb"><svg width="13" height="13" viewBox="0 0 13 13" style="position:absolute;left:0;top:0"><path d="M2.800,6.800 L5.300,9.800 L10.300,2.600" fill="none" stroke="#fff" stroke-width="1.700"/></svg></div></div>
<div class="row" style="top:5px"><div class="th"><svg width="28" height="28" viewBox="0 0 29 29" style="position:absolute;left:0;top:0"></svg></div><div class="nm"><b>90</b> (Curve)</div><div class="cb"><svg width="13" height="13" viewBox="0 0 13 13" style="position:absolute;left:0;top:0"><path d="M2.800,6.800 L5.300,9.800 L10.300,2.600" fill="none" stroke="#fff" stroke-width="1.700"/></svg></div></div>
<div class="row" style="top:38px"><div class="th"><svg width="28" height="28" viewBox="0 0 29 29" style="position:absolute;left:0;top:0"><path d="M3,14.500 H27" stroke="#222" stroke-width="1" stroke-dasharray="4 3"/></svg></div><div class="nm"><b>90</b> (Curve)</div><div class="cb"><svg width="13" height="13" viewBox="0 0 13 13" style="position:absolute;left:0;top:0"><path d="M2.800,6.800 L5.300,9.800 L10.300,2.600" fill="none" stroke="#fff" stroke-width="1.700"/></svg></div></div>
<div class="row" style="top:71px"><div class="th"><svg width="28" height="28" viewBox="0 0 29 29" style="position:absolute;left:0;top:0"><path d="M3,14.500 H27" stroke="#222" stroke-width="1" stroke-dasharray="4 3"/></svg></div><div class="nm"><b>90</b> (Curve)</div><div class="cb"><svg width="13" height="13" viewBox="0 0 13 13" style="position:absolute;left:0;top:0"><path d="M2.800,6.800 L5.300,9.800 L10.300,2.600" fill="none" stroke="#fff" stroke-width="1.700"/></svg></div></div>
<div class="row" style="top:104px"><div class="th"><svg width="28" height="28" viewBox="0 0 29 29" style="position:absolute;left:0;top:0"></svg></div><div class="nm"><b>90</b> (Curve)</div><div class="cb"><svg width="13" height="13" viewBox="0 0 13 13" style="position:absolute;left:0;top:0"><path d="M2.800,6.800 L5.300,9.800 L10.300,2.600" fill="none" stroke="#fff" stroke-width="1.700"/></svg></div></div>
<div class="row" style="top:137px"><div class="th"><svg width="28" height="28" viewBox="0 0 29 29" style="position:absolute;left:0;top:0"></svg></div><div class="nm"><b>90</b> (Curve)</div><div class="cb"><svg width="13" height="13" viewBox="0 0 13 13" style="position:absolute;left:0;top:0"><path d="M2.800,6.800 L5.300,9.800 L10.300,2.600" fill="none" stroke="#fff" stroke-width="1.700"/></svg></div></div>
<div class="row sel" style="top:170px"><div class="th"><svg width="28" height="28" viewBox="0 0 29 29" style="position:absolute;left:0;top:0"></svg></div><div class="nm"><b>90</b> (Curve)</div><div class="cb"><svg width="13" height="13" viewBox="0 0 13 13" style="position:absolute;left:0;top:0"><path d="M2.800,6.800 L5.300,9.800 L10.300,2.600" fill="none" stroke="#fff" stroke-width="1.700"/></svg></div></div>
<div class="row" style="top:203px"><div class="th"><svg width="28" height="28" viewBox="0 0 29 29" style="position:absolute;left:0;top:0"></svg></div><div class="nm"><b>90</b> (Curve)</div><div class="cb"><svg width="13" height="13" viewBox="0 0 13 13" style="position:absolute;left:0;top:0"><path d="M2.800,6.800 L5.300,9.800 L10.300,2.600" fill="none" stroke="#fff" stroke-width="1.700"/></svg></div></div>
<div class="row" style="top:236px"><div class="th"><svg width="28" height="28" viewBox="0 0 29 29" style="position:absolute;left:0;top:0"><path d="M15.500,1 V28" stroke="#242424" stroke-width="1"/></svg></div><div class="nm">(Curve)</div><div class="cb"><svg width="13" height="13" viewBox="0 0 13 13" style="position:absolute;left:0;top:0"><path d="M2.800,6.800 L5.300,9.800 L10.300,2.600" fill="none" stroke="#fff" stroke-width="1.700"/></svg></div></div>
<div class="row" style="top:269px"><div class="th"><svg width="28" height="28" viewBox="0 0 29 29" style="position:absolute;left:0;top:0"><path d="M1,14.500 H28" stroke="#222" stroke-width="1"/></svg></div><div class="nm">(Curve)</div><div class="cb"><svg width="13" height="13" viewBox="0 0 13 13" style="position:absolute;left:0;top:0"><path d="M2.800,6.800 L5.300,9.800 L10.300,2.600" fill="none" stroke="#fff" stroke-width="1.700"/></svg></div></div>
<div class="row" style="top:302px"><div class="th"><svg width="28" height="28" viewBox="0 0 29 29" style="position:absolute;left:0;top:0"><path d="M13.500,1 L16,28" stroke="#262626" stroke-width="1"/></svg></div><div class="nm">(Curve)</div><div class="cb"><svg width="13" height="13" viewBox="0 0 13 13" style="position:absolute;left:0;top:0"><path d="M2.800,6.800 L5.300,9.800 L10.300,2.600" fill="none" stroke="#fff" stroke-width="1.700"/></svg></div></div>
<div class="row" style="top:335px"><div class="th"><svg width="28" height="28" viewBox="0 0 29 29" style="position:absolute;left:0;top:0"></svg></div><div class="nm">(Curve)</div><div class="cb"><svg width="13" height="13" viewBox="0 0 13 13" style="position:absolute;left:0;top:0"><path d="M2.800,6.800 L5.300,9.800 L10.300,2.600" fill="none" stroke="#fff" stroke-width="1.700"/></svg></div></div>
<div class="row" style="top:368px"><div class="th"><svg width="28" height="28" viewBox="0 0 29 29" style="position:absolute;left:0;top:0"><path d="M15.500,1 V28" stroke="#242424" stroke-width="1"/></svg></div><div class="nm">(Curve)</div><div class="cb"><svg width="13" height="13" viewBox="0 0 13 13" style="position:absolute;left:0;top:0"><path d="M2.800,6.800 L5.300,9.800 L10.300,2.600" fill="none" stroke="#fff" stroke-width="1.700"/></svg></div></div>
<div class="row" style="top:401px"><div class="th"><svg width="28" height="28" viewBox="0 0 29 29" style="position:absolute;left:0;top:0"><path d="M1,14.500 H28" stroke="#1e1e1e" stroke-width="1"/></svg></div><div class="nm">(Curve)</div><div class="cb"><svg width="13" height="13" viewBox="0 0 13 13" style="position:absolute;left:0;top:0"><path d="M2.800,6.800 L5.300,9.800 L10.300,2.600" fill="none" stroke="#fff" stroke-width="1.700"/></svg></div></div>
<div class="row" style="top:434px"><div class="th"><svg width="28" height="28" viewBox="0 0 29 29" style="position:absolute;left:0;top:0"><path d="M17,1 L13,28" stroke="#242424" stroke-width="1"/></svg></div><div class="nm">(Curve)</div><div class="cb"><svg width="13" height="13" viewBox="0 0 13 13" style="position:absolute;left:0;top:0"><path d="M2.800,6.800 L5.300,9.800 L10.300,2.600" fill="none" stroke="#fff" stroke-width="1.700"/></svg></div></div>
<div class="row" style="top:467px"><div class="th"><svg width="28" height="28" viewBox="0 0 29 29" style="position:absolute;left:0;top:0"><path d="M10,7 L18,24" stroke="#000" stroke-width="3" stroke-linecap="round"/></svg></div><div class="nm">(Curve)</div><div class="cb"><svg width="13" height="13" viewBox="0 0 13 13" style="position:absolute;left:0;top:0"><path d="M2.800,6.800 L5.300,9.800 L10.300,2.600" fill="none" stroke="#fff" stroke-width="1.700"/></svg></div></div>
<div class="abs" style="left:299px;top:0;width:14px;height:495px;background:#333"></div>
<div class="abs" style="left:304px;top:78px;width:7px;height:67px;background:#5a5a5a;border-radius:3.500px"></div>
</div>
<div class="abs" style="left:0;top:545px;width:313px;height:23px;background:#3e3e3e;border-top:1px solid #2c2c2c"></div>
<div class="abs" style="left:6px;top:547px;width:20px;height:19px;background:#494949"></div>
<svg class="abs" style="left:8px;top:550px" width="16" height="14" viewBox="0 0 16 14"><path d="M1,3.200 L8,6.200 L15,3.200 L8,0.500Z" fill="#d0d0d0"/><path d="M1,6.200 L8,9.200 L15,6.200 M1,9.500 L8,12.500 L15,9.500" fill="none" stroke="#d0d0d0" stroke-width="1.500"/></svg>
<svg class="abs" style="left:133px;top:551px" width="14" height="13" viewBox="0 0 14 13"><rect width="14" height="13" fill="#bdbdbd"/><circle cx="7" cy="6.500" r="3.800" fill="#383838"/></svg>
<svg class="abs" style="left:156px;top:551px" width="14" height="14" viewBox="0 0 14 14"><circle cx="7" cy="7" r="5.600" fill="#3e3e3e" stroke="#bdbdbd" stroke-width="1.200"/><path d="M10.960,3.040 A5.600,5.600 0 0 0 3.040,10.960Z" fill="#bdbdbd"/></svg>
<div class="abs" style="left:178px;top:548px;font-family:'Liberation Serif',serif;font-style:italic;font-size:15px;line-height:17px;color:#c4c4c4">fx</div>
<svg class="abs" style="left:250px;top:551px" width="11" height="13" viewBox="0 0 11 13"><path d="M0.700,0.700 H6.500 L10.300,4.500 V12.300 H0.700Z M6.500,0.700 V4.500 H10.300" fill="none" stroke="#bdbdbd" stroke-width="1.200"/></svg>
<svg class="abs" style="left:272px;top:551px" width="12" height="12" viewBox="0 0 12 12"><rect width="12" height="12" fill="#bdbdbd"/><rect x="2.4" y="0.0" width="2.400" height="2.400" fill="#3a3a3a"/><rect x="7.2" y="0.0" width="2.400" height="2.400" fill="#3a3a3a"/><rect x="0.0" y="2.4" width="2.400" height="2.400" fill="#3a3a3a"/><rect x="4.8" y="2.4" width="2.400" height="2.400" fill="#3a3a3a"/><rect x="9.6" y="2.4" width="2.400" height="2.400" fill="#3a3a3a"/><rect x="2.4" y="4.8" width="2.400" height="2.400" fill="#3a3a3a"/><rect x="7.2" y="4.8" width="2.400" height="2.400" fill="#3a3a3a"/><rect x="0.0" y="7.2" width="2.400" height="2.400" fill="#3a3a3a"/><rect x="4.8" y="7.2" width="2.400" height="2.400" fill="#3a3a3a"/><rect x="9.6" y="7.2" width="2.400" height="2.400" fill="#3a3a3a"/><rect x="2.4" y="9.6" width="2.400" height="2.400" fill="#3a3a3a"/><rect x="7.2" y="9.6" width="2.400" height="2.400" fill="#3a3a3a"/></svg>
<svg class="abs" style="left:296px;top:550px" width="10" height="14" viewBox="0 0 10 14"><path d="M0,2.500 H10 M3.500,2.500 V1 H6.500 V2.500" stroke="#b4b4b4" stroke-width="1.300" fill="none"/><path d="M1,4 H9 V12.500 Q9,13.500 8,13.500 H2 Q1,13.500 1,12.500Z" fill="#b4b4b4"/><path d="M3.300,5.500 V12 M5,5.500 V12 M6.700,5.500 V12" stroke="#555" stroke-width=".8"/></svg>
</div>
<div id="status" class="abs">'90' selected. <b>Drag</b> to move selection. <b>Click</b> another object to select it. <b>Click</b> on an empty area to deselect selection.</div>
<!--OVERLAY-->
<svg class="abs" style="left:0;top:0;pointer-events:none" width="1416" height="666" viewBox="0 0 1416 666">
<g fill="#f00a14" stroke="#ec0812" stroke-width="2.2" stroke-linejoin="round">
<g transform="translate(594,256) rotate(6.143)"><path d="M0.0,-0.5 L528.1,-3.3 L528.1,3.3 L0.0,0.5Z" stroke="none"/><path d="M527.6,-2.3 L524.6,-6.9 L539.1,0.0 L524.6,6.9 L527.6,2.3Z"/></g>
<g transform="translate(522.2,432.6) rotate(-60.833)"><path d="M0.0,-0.5 L102.3,-2.8 L102.3,2.8 L0.0,0.5Z" stroke="none"/><path d="M101.8,-1.8 L98.8,-6.9 L113.3,0.0 L98.8,6.9 L101.8,1.8Z"/></g>
<g transform="translate(1053,454) rotate(-48.044)"><path d="M0.0,-0.5 L163.8,-3.0 L163.8,3.0 L0.0,0.5Z" stroke="none"/><path d="M163.3,-2.0 L160.3,-6.9 L174.8,0.0 L160.3,6.9 L163.3,2.0Z"/></g>
</g>
<g font-family="Liberation Sans, sans-serif" font-weight="bold" stroke-linejoin="round">
<text x="450.6" y="451.8" font-size="14.2" textLength="143" lengthAdjust="spacingAndGlyphs" fill="#fff" stroke="#fff" stroke-width="2.6" stroke-opacity=".9">Select the crease line</text>
<text x="450.6" y="451.8" font-size="14.2" textLength="143" lengthAdjust="spacingAndGlyphs" fill="#e2000e" stroke="#e2000e" stroke-width=".8">Select the crease line</text>
<text x="955" y="473.8" font-size="15.4" textLength="196" lengthAdjust="spacingAndGlyphs" fill="#fff" stroke="#fff" stroke-width="4">Then change its name to "90"</text>
<text x="955" y="473.8" font-size="15.4" textLength="196" lengthAdjust="spacingAndGlyphs" fill="#e2000e" stroke="#e2000e" stroke-width=".9">Then change its name to "90"</text>
</g>
</svg>
<!--/OVERLAY-->
</div>
</body>
</html>
